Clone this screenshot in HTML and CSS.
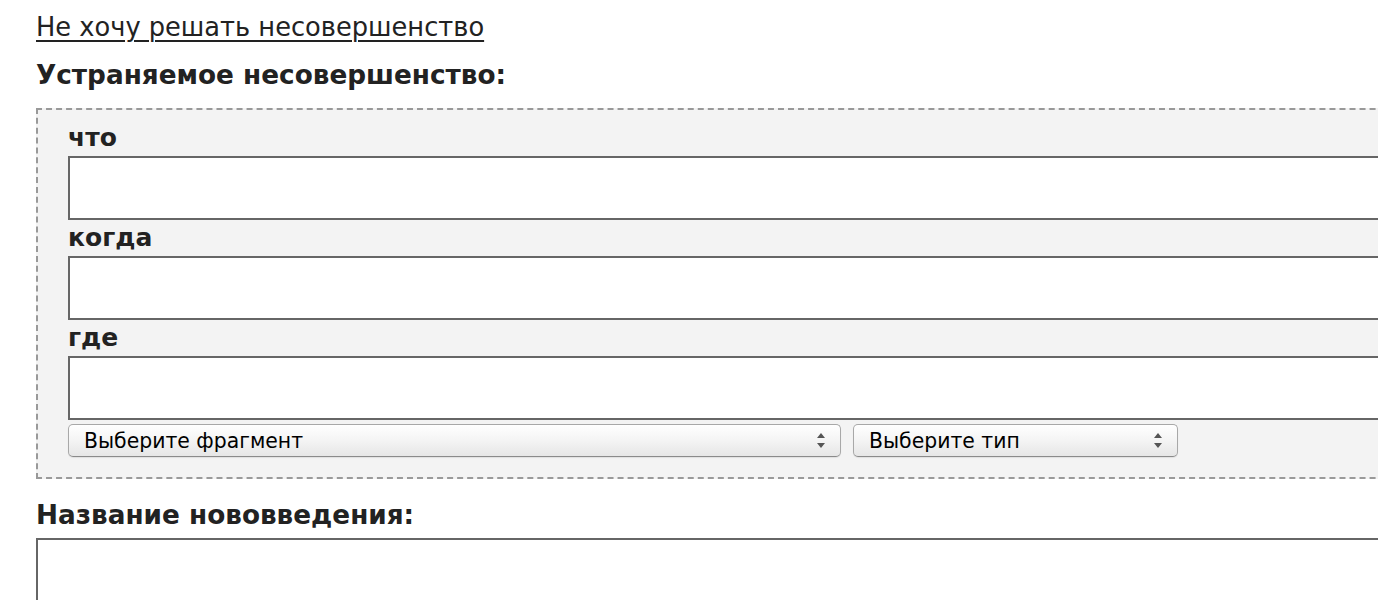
FILE: index.html
```html
<!DOCTYPE html>
<html lang="ru">
<head>
<meta charset="utf-8">
<title>Нововведение</title>
<link rel="stylesheet" href="styles.css">
</head>
<body>
<div class="page">
  <a class="skip-link" href="#">Не хочу решать несовершенство</a>
  <h2 class="section-title first">Устраняемое несовершенство:</h2>
  <div class="flaw-box">
    <div class="field-label">что</div>
    <textarea class="field-input"></textarea>
    <div class="field-label">когда</div>
    <textarea class="field-input"></textarea>
    <div class="field-label">где</div>
    <textarea class="field-input"></textarea>
    <div class="select-row">
      <div class="fake-select wide">
        <span class="select-text">Выберите фрагмент</span>
        <svg class="select-arrows" width="8" height="15" viewBox="0 0 8 15"><path d="M4 0 L8 5 L0 5 Z M0 10 L8 10 L4 15 Z" fill="#555"/></svg>
      </div>
      <div class="fake-select narrow">
        <span class="select-text">Выберите тип</span>
        <svg class="select-arrows" width="8" height="15" viewBox="0 0 8 15"><path d="M4 0 L8 5 L0 5 Z M0 10 L8 10 L4 15 Z" fill="#555"/></svg>
      </div>
    </div>
  </div>
  <h2 class="section-title second">Название нововведения:</h2>
  <textarea class="field-input title-input"></textarea>
</div>
</body>
</html>
```
FILE: styles.css
```css
html, body {
  margin: 0;
  padding: 0;
  overflow: hidden;
  background: #fff;
}
body {
  font-family: "DejaVu Sans", Verdana, sans-serif;
  color: #222;
}
.page {
  width: 1500px;
  padding: 9px 0 0 36px;
}
.skip-link {
  display: block;
  width: max-content;
  font-size: 25.7px;
  line-height: 36px;
  color: #222;
  text-decoration: underline;
  text-underline-offset: 4px;
  text-decoration-thickness: 2px;
}
.section-title {
  margin: 0;
  font-size: 26.3px;
  line-height: 36px;
  font-weight: bold;
  color: #222;
}
.section-title.first {
  margin: 12px 0 15px;
}
.section-title.second {
  margin: 18px 0 5px;
}
.flaw-box {
  border: 2px dashed #999;
  background: #f3f3f3;
  padding: 10px 0 20px 30px;
}
.field-label {
  font-size: 25px;
  line-height: 36px;
  font-weight: bold;
  color: #222;
}
.field-input {
  display: block;
  box-sizing: border-box;
  width: 100%;
  height: 64px;
  margin: 0;
  border: 2px solid #666;
  background: #fff;
  resize: none;
  font: inherit;
}
.title-input {
  height: 120px;
}
.select-row {
  display: flex;
  gap: 12px;
  margin-top: 4px;
}
.fake-select {
  box-sizing: border-box;
  height: 33px;
  display: flex;
  align-items: center;
  justify-content: space-between;
  padding: 0 15px 0 15px;
  border: 1px solid #a8a8a8;
  border-bottom-color: #8a8a8a;
  border-radius: 5px;
  background: linear-gradient(#ffffff, #f4f4f4 50%, #e6e6e6);
  box-shadow: inset 0 1px 0 #fff, 0 1px 1px rgba(0, 0, 0, 0.08);
  color: #000;
  font-size: 20.4px;
}
.fake-select.wide {
  width: 773px;
}
.fake-select.narrow {
  width: 325px;
}
.select-arrows {
  display: block;
}
```
